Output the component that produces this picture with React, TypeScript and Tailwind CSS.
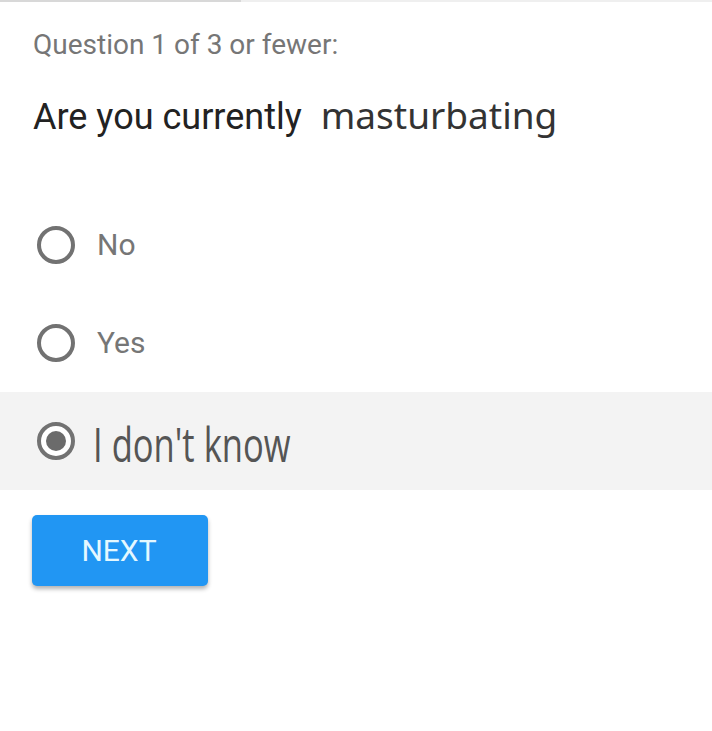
function Radio({ checked }: { checked?: boolean }) {
  return (
    <span className="flex h-[38px] w-[38px] shrink-0 items-center justify-center rounded-full border-[4px] border-[#727272] bg-white">
      {checked && <span className="h-[20px] w-[20px] rounded-full bg-[#6b6b6b]" />}
    </span>
  );
}

export default function App() {
  return (
    <div className="min-h-[731px] w-full bg-white">
      {/* progress */}
      <div className="flex h-[2px] w-full">
        <div className="w-[241px] bg-[#d8d8d8]" />
        <div className="flex-1 bg-[#efefef]" />
      </div>

      <div className="mt-[27px] pl-[33px] font-['Roboto',sans-serif] text-[28px] leading-[32px] text-[#767676]">
        Question 1 of 3 or fewer:
      </div>

      <div className="mt-[32px] flex h-[44px] items-baseline pl-[33px] leading-[44px]">
        <span className="font-['Roboto',sans-serif] text-[36px] text-[#222222]">Are you currently</span>
        <span className="ml-[19px] font-['Noto_Sans',sans-serif] text-[37px] text-[#333333]">masturbating</span>
      </div>

      <div className="mt-[59px] flex flex-col">
        <label className="flex h-[98px] items-center pl-[37px]">
          <Radio />
          <span className="ml-[22px] font-['Roboto',sans-serif] text-[30px] leading-none text-[#767676]">No</span>
        </label>
        <label className="flex h-[98px] items-center pl-[37px]">
          <Radio />
          <span className="ml-[22px] font-['Roboto',sans-serif] text-[30px] leading-none text-[#767676]">Yes</span>
        </label>
        <label className="flex h-[98px] items-center bg-[#f3f3f3] pl-[37px]">
          <Radio checked />
          <span className="ml-[18px] mt-[6px] inline-block origin-left scale-x-[0.72] whitespace-nowrap font-['Open_Sans',sans-serif] text-[48px] font-medium leading-none text-[#555555]">
            I don't know
          </span>
        </label>
      </div>

      <div className="mt-[25px] pl-[32px]">
        <button className="flex h-[71px] w-[176px] items-center justify-center rounded-[5px] bg-[#2196f3] pr-[2px] font-['Roboto',sans-serif] text-[30px] leading-none text-[#e4f8ff] shadow-[0_3px_4px_rgba(0,0,0,0.3)]">
          NEXT
        </button>
      </div>
    </div>
  );
}
